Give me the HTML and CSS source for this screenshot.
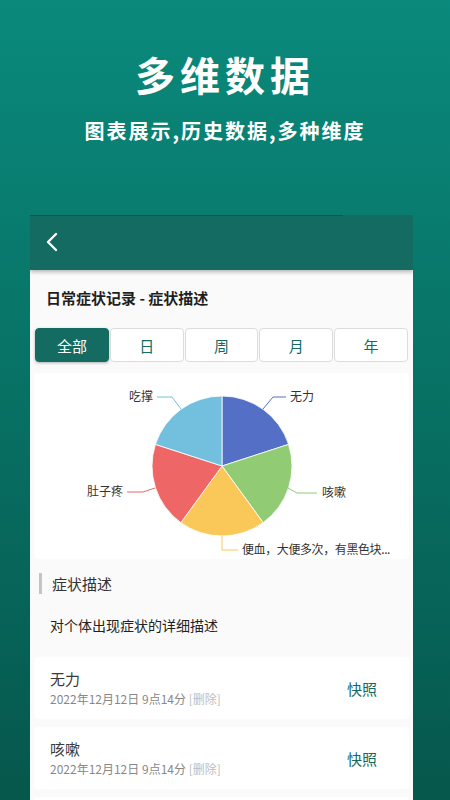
FILE: index.html
```html
<!DOCTYPE html>
<html lang="zh">
<head>
<meta charset="utf-8">
<link rel="stylesheet" href="styles.css">
</head>
<body>
<div class="page">
  <div class="hero">
    <div class="hero-title">多维数据</div>
    <div class="hero-sub">图表展示,历史数据,多种维度</div>
  </div>
  <div class="screen">
    <div class="appbar">
      <div class="appbar-line"></div>
      <div class="appbar-row">
        <svg class="back" width="14" height="20" viewBox="0 0 14 20"><path d="M11 2 L3 10 L11 18" fill="none" stroke="#fff" stroke-width="2.4" stroke-linecap="round" stroke-linejoin="round"/></svg>
      </div>
    </div>
    <div class="page-title">日常症状记录 - 症状描述</div>
    <div class="tabs">
      <div class="tab active">全部</div>
      <div class="tab">日</div>
      <div class="tab">周</div>
      <div class="tab">月</div>
      <div class="tab">年</div>
    </div>
    <div class="chart-card">
      <svg width="375" height="186" viewBox="0 0 375 186">
        <g transform="translate(188,93)">
          <path d="M0 0 L0 -70 A70 70 0 0 1 66.57 -21.63 Z" fill="#5470c6" stroke="#fff" stroke-width="0.8"/>
          <path d="M0 0 L66.57 -21.63 A70 70 0 0 1 41.14 56.63 Z" fill="#91cc75" stroke="#fff" stroke-width="0.8"/>
          <path d="M0 0 L41.14 56.63 A70 70 0 0 1 -41.14 56.63 Z" fill="#fac858" stroke="#fff" stroke-width="0.8"/>
          <path d="M0 0 L-41.14 56.63 A70 70 0 0 1 -66.57 -21.63 Z" fill="#ee6666" stroke="#fff" stroke-width="0.8"/>
          <path d="M0 0 L-66.57 -21.63 A70 70 0 0 1 0 -70 Z" fill="#73c0de" stroke="#fff" stroke-width="0.8"/>
        </g>
        <polyline points="229,36 239,24 252,24" fill="none" stroke="#5470c6" stroke-width="1"/>
        <polyline points="254,115 263,120 283,120" fill="none" stroke="#91cc75" stroke-width="1"/>
        <polyline points="188,163 188,177 204,177" fill="none" stroke="#fac858" stroke-width="1"/>
        <polyline points="121,115 109,119 93,119" fill="none" stroke="#ee6666" stroke-width="1"/>
        <polyline points="147,36 138,24 123,24" fill="none" stroke="#73c0de" stroke-width="1"/>
        <text class="lbl" x="256" y="28">无力</text>
        <text class="lbl" x="288" y="124">咳嗽</text>
        <text class="lbl" x="208" y="181" letter-spacing="-0.4">便血，大便多次，有黑色块...</text>
        <text class="lbl" x="89" y="123" text-anchor="end">肚子疼</text>
        <text class="lbl" x="119" y="28" text-anchor="end">吃撑</text>
      </svg>
    </div>
    <div class="section-head">
      <div class="section-bar"></div>
      <div class="section-text">症状描述</div>
    </div>
    <div class="desc">对个体出现症状的详细描述</div>
    <div class="list">
      <div class="item">
        <div class="item-main">
          <div class="item-title">无力</div>
          <div class="item-date">2022年12月12日 9点14分 <span class="del">[删除]</span></div>
        </div>
        <div class="item-action">快照</div>
      </div>
      <div class="item">
        <div class="item-main">
          <div class="item-title">咳嗽</div>
          <div class="item-date">2022年12月12日 9点14分 <span class="del">[删除]</span></div>
        </div>
        <div class="item-action">快照</div>
      </div>
      <div class="item"></div>
    </div>
  </div>
</div>
</body>
</html>
```

FILE: styles.css
```css
* { box-sizing: border-box; }
html, body { margin: 0; padding: 0; }
body {
  width: 450px;
  height: 800px;
  overflow: hidden;
  font-family: "Noto Sans CJK SC", "Noto Sans", sans-serif;
}
.page {
  width: 450px;
  height: 800px;
  overflow: hidden;
  background: linear-gradient(180deg, #0a8a7c 0%, #08786b 35%, #06574c 100%);
}
.hero {
  height: 215px;
  display: flex;
  flex-direction: column;
  align-items: center;
  padding-top: 50px;
  color: #fff;
}
.hero-title {
  font-size: 40px;
  line-height: 48px;
  font-weight: 700;
  letter-spacing: 5px;
  padding-left: 0;
}
.hero-sub {
  margin-top: 19px;
  font-size: 20px;
  line-height: 28px;
  font-weight: 700;
  letter-spacing: 2px;
}
.screen {
  margin-left: 30px;
  width: 383px;
  height: 585px;
  background: #fafafa;
  overflow: hidden;
}
.appbar {
  height: 55px;
  background: #136b62;
  box-shadow: 0 2px 4px rgba(0, 0, 0, 0.28);
  position: relative;
  z-index: 1;
}
.appbar-line {
  width: 313px;
  height: 1px;
  background: #0d5750;
}
.appbar-row {
  height: 54px;
  display: flex;
  align-items: center;
  padding-left: 15px;
  padding-bottom: 2px;
}
.back { display: block; }
.page-title {
  padding: 17px 0 0 16px;
  font-size: 15px;
  line-height: 22px;
  font-weight: 700;
  color: #1f1f1f;
}
.tabs {
  margin: 19px 0 0 5px;
  width: 373px;
  display: flex;
  gap: 1px;
}
.tab {
  flex: 1;
  height: 34px;
  border: 1px solid #dcdcdc;
  border-radius: 4px;
  background: #fff;
  color: #136b62;
  font-size: 15px;
  display: flex;
  align-items: center;
  justify-content: center;
}
.tab.active {
  background: #136b62;
  border-color: #136b62;
  color: #fff;
  box-shadow: 0 1px 3px rgba(0, 0, 0, 0.3);
}
.chart-card {
  margin: 11px 4px 0 4px;
  height: 186px;
  background: #fff;
  border-radius: 4px;
}
.chart-card svg { display: block; }
.lbl {
  font-size: 12px;
  fill: #333;
  font-family: "Noto Sans CJK SC", "Noto Sans", sans-serif;
}
.section-head {
  margin: 14px 0 0 9px;
  display: flex;
  align-items: center;
  height: 21px;
}
.section-bar {
  width: 3px;
  height: 21px;
  background: #c4c4c4;
}
.section-text {
  margin-left: 10px;
  font-size: 15px;
  line-height: 21px;
  color: #333;
}
.desc {
  margin-top: 21px;
  padding-left: 20px;
  font-size: 14px;
  line-height: 20px;
  color: #222;
}
.list {
  margin: 22px 4px 0 4px;
  display: flex;
  flex-direction: column;
  gap: 8px;
}
.item {
  height: 62px;
  flex: none;
  background: #fff;
  border-radius: 4px;
  display: flex;
  align-items: center;
  padding: 0 32px 0 16px;
}
.item-main {
  flex: 1;
  padding-top: 1px;
}
.item-title {
  font-size: 15px;
  line-height: 20px;
  color: #3a3a3a;
}
.item-date {
  margin-top: 1px;
  font-size: 12px;
  line-height: 18px;
  color: #888;
}
.del { color: #bdbdbd; }
.item-action {
  font-size: 15px;
  color: #136b62;
}
```
